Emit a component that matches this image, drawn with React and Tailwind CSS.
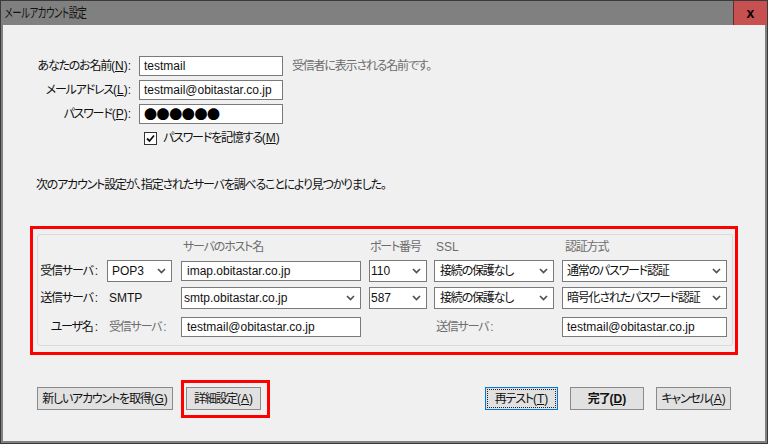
import React from "react";

const font = {
  fontFamily: '"Liberation Sans", "Noto Sans CJK JP", sans-serif',
};

function Chev() {
  return (
    <svg width="9" height="6" viewBox="0 0 9 6" className="shrink-0">
      <path d="M1 1 L4.5 4.5 L8 1" fill="none" stroke="#505050" strokeWidth="1.7" />
    </svg>
  );
}

function K({ k, colon }) {
  return (
    <span className="tracking-normal">
      (<u>{k}</u>){colon ? ":" : ""}
    </span>
  );
}

function C() {
  return <span className="tracking-normal pl-[2px]">:</span>;
}

function Select({ className, children }) {
  return (
    <div className={"flex items-center justify-between h-[22px] bg-white border border-[#7a7a7a] pr-[5px] " + className}>
      <span className="whitespace-nowrap">{children}</span>
      <Chev />
    </div>
  );
}

function Input({ className, children }) {
  return (
    <div className={"flex items-center h-[20px] bg-white border border-[#7a7a7a] whitespace-nowrap " + className}>
      {children}
    </div>
  );
}

function Btn({ className, children }) {
  return (
    <div className={"flex items-center justify-center h-[23px] bg-[#e1e1e1] border border-[#8a8a8a] whitespace-nowrap " + className}>
      {children}
    </div>
  );
}

function Row({ children, className }) {
  return (
    <div className={"grid grid-cols-[69px_74px_188px_65px_128px_165px] items-center " + className}>
      {children}
    </div>
  );
}

function Lbl({ children }) {
  return <div className="flex justify-end pr-[9px] whitespace-nowrap">{children}</div>;
}

export default function App() {
  return (
    <div
      className="w-[768px] h-[444px] bg-[#808080] border border-[#3a3a3a] flex flex-col text-[12px] text-[#111] tracking-[-1.2px] [font-feature-settings:'palt'] overflow-hidden"
      style={font}
    >
      {/* title bar */}
      <div className="h-[24px] flex items-center justify-between shrink-0">
        <span className="pl-[5px] inline-block origin-left scale-x-[0.72] whitespace-nowrap text-[13px] text-[#111] tracking-[-0.6px]">
          メールアカウント設定
        </span>
        <div className="w-[34px] h-[24px] bg-[#c75050] border-l border-[#5a3030] flex items-center justify-center font-bold text-[14px] text-black leading-none tracking-normal">
          x
        </div>
      </div>

      {/* body */}
      <div className="flex-1 mx-[2px] mb-[2px] bg-[#f0f0f0] flex flex-col">
        {/* form */}
        <div className="mt-[31px] grid grid-cols-[128px_144px_auto] gap-x-[8px] gap-y-[4px] items-center">
          <div className="flex justify-end leading-[20px] whitespace-nowrap">
            あなたのお名前<K k="N" colon />
          </div>
          <Input className="pl-[4px] tracking-normal">testmail</Input>
          <div className="pl-[1px] text-[#6d6d6d] whitespace-nowrap">受信者に表示される名前です。</div>

          <div className="flex justify-end leading-[20px] whitespace-nowrap">
            メールアドレス<K k="L" colon />
          </div>
          <Input className="pl-[4px] tracking-normal">testmail@obitastar.co.jp</Input>
          <div />

          <div className="flex justify-end leading-[20px] whitespace-nowrap">
            パスワード<K k="P" colon />
          </div>
          <Input className="pl-[4px] text-[13px] tracking-[-0.4px] text-black [font-family:'Noto_Sans_CJK_JP',sans-serif]">
            ●●●●●●
          </Input>
          <div />

          <div />
          <div className="flex items-center h-[20px] pl-[5px] gap-[6px]">
            <div className="w-[13px] h-[13px] border border-[#333] bg-white flex items-center justify-center">
              <svg width="11" height="11" viewBox="0 0 11 11">
                <path d="M2 5.5 L4.5 8 L9 2.5" fill="none" stroke="#111" strokeWidth="1.8" />
              </svg>
            </div>
            <span className="whitespace-nowrap">
              パスワードを記憶する<K k="M" />
            </span>
          </div>
          <div />
        </div>

        <div className="mt-[29px] pl-[33px] leading-[16px] whitespace-nowrap">
          次のアカウント設定が、指定されたサーバを調べることにより見つかりました。
        </div>

        {/* red highlight box */}
        <div className="mt-[33px] ml-[27px] w-[708px] h-[129px] border-[3px] border-[#ff0000] pl-[4px] pr-[2px] pt-[5px] pb-[6px]">
          <div className="h-[112px] border border-[#d9d9d9] rounded-[3px] pt-[3px] flex flex-col">
            <Row className="h-[16px] text-[#6d6d6d]">
              <div />
              <div />
              <div className="pl-[2px] whitespace-nowrap">サーバのホスト名</div>
              <div className="pl-[1px] whitespace-nowrap">ポート番号</div>
              <div className="pl-[2px] tracking-normal">SSL</div>
              <div className="pl-[3px] whitespace-nowrap">認証方式</div>
            </Row>
            <Row className="mt-[6px] h-[22px]">
              <Lbl>
                受信サーバ<C />
              </Lbl>
              <Select className="w-[65px] pl-[4px] tracking-normal">POP3</Select>
              <Input className="w-[180px] pl-[5px] tracking-normal">imap.obitastar.co.jp</Input>
              <Select className="w-[58px] pl-[1px] tracking-normal">110</Select>
              <Select className="w-[120px] pl-[5px]">接続の保護なし</Select>
              <Select className="w-[165px] pl-[4px]">通常のパスワード認証</Select>
            </Row>
            <Row className="mt-[5px] h-[22px]">
              <Lbl>
                送信サーバ<C />
              </Lbl>
              <div className="pl-[2px] tracking-normal">SMTP</div>
              <Select className="w-[180px] pl-[2px] tracking-normal">smtp.obitastar.co.jp</Select>
              <Select className="w-[58px] pl-[1px] tracking-normal">587</Select>
              <Select className="w-[120px] pl-[5px]">接続の保護なし</Select>
              <Select className="w-[165px] pl-[4px]">暗号化されたパスワード認証</Select>
            </Row>
            <Row className="mt-[8px] h-[20px]">
              <Lbl>
                ユーザ名<C />
              </Lbl>
              <div className="pl-[2px] text-[#6d6d6d] whitespace-nowrap">
                受信サーバ<C />
              </div>
              <Input className="w-[180px] pl-[5px] tracking-normal">testmail@obitastar.co.jp</Input>
              <div />
              <div className="pl-[2px] text-[#6d6d6d] whitespace-nowrap">
                送信サーバ<C />
              </div>
              <Input className="w-[165px] pl-[4px] tracking-normal">testmail@obitastar.co.jp</Input>
            </Row>
          </div>
        </div>

        {/* buttons */}
        <div className="mt-[32px] px-[34px] flex items-center justify-between">
          <div className="flex items-center gap-[13px]">
            <Btn className="w-[136px]">
              新しいアカウントを取得<K k="G" />
            </Btn>
            <div className="relative">
              <Btn className="w-[75px]">
                詳細設定<K k="A" />
              </Btn>
              <div className="absolute left-[-5px] right-[-9px] top-[-7px] bottom-[-8px] border-[3px] border-[#ff0000]" />
            </div>
          </div>
          <div className="flex items-center gap-[12px]">
            <div className="w-[73px] h-[23px] bg-[#e1e1e1] border border-[#0078d7] p-[1px]">
              <div className="w-full h-full border border-dotted border-[#222] flex items-center justify-center whitespace-nowrap">
                再テスト<K k="T" />
              </div>
            </div>
            <Btn className="w-[74px] font-bold">
              完了<K k="D" />
            </Btn>
            <Btn className="w-[75px]">
              キャンセル<K k="A" />
            </Btn>
          </div>
        </div>
      </div>
    </div>
  );
}
